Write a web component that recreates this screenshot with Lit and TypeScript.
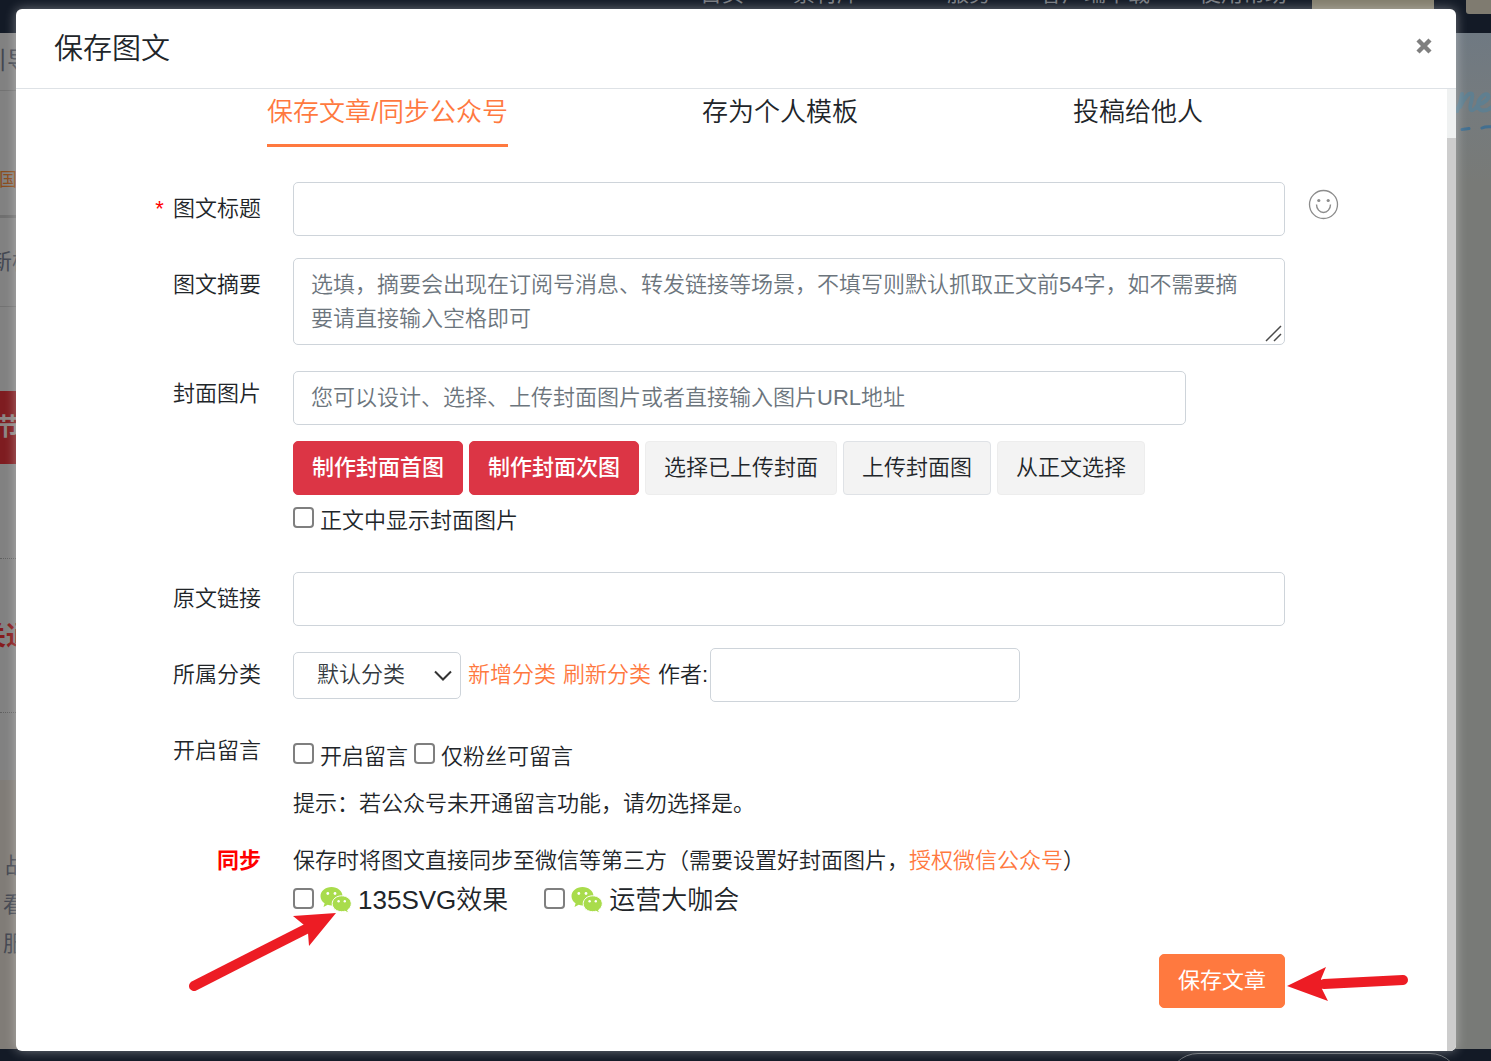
import { LitElement, html, css, svg } from "lit";
import { customElement, state } from "lit/decorators.js";

const fontStack = css`"Liberation Sans", "Noto Sans CJK SC", sans-serif`;

/** The dimmed editor page that stays visible round the dialog. */
@customElement("page-backdrop")
class PageBackdrop extends LitElement {
  static styles = css`
    :host {
      display: block;
      overflow: hidden;
      background: #787a77;
      font: 22px/34px ${fontStack};
      color: #424650;
      white-space: nowrap;
    }
    .page {
      position: relative;
      height: 100%;
      display: flex;
      flex-direction: column;
    }
    .nav {
      height: 33px;
      background: #131a26;
      color: #777a80;
      display: flex;
      justify-content: flex-end;
      align-items: flex-start;
      overflow: hidden;
    }
    .links {
      display: flex;
      margin-top: -23px;
      margin-right: 25px;
    }
    .links span {
      margin-left: 49px;
    }
    .links .apart {
      margin-left: 88px;
    }
    .plan {
      width: 122px;
      height: 33px;
      background: #827d6c;
      margin-right: 32px;
    }
    .user {
      width: 25px;
      height: 14px;
      background: #7f7b70;
      border-bottom-left-radius: 3px;
    }
    .main {
      flex: 1;
      display: flex;
      justify-content: space-between;
    }
    .side {
      position: relative;
      width: 60px;
      background: #818181;
    }
    .banner {
      position: relative;
      width: 60px;
      background: linear-gradient(#6f7982, #757b7e 70px, #787a77 150px);
    }
    .item {
      position: absolute;
      right: 42px;
    }
    .rule {
      position: absolute;
      left: 0;
      width: 100%;
      border-top: 1px solid #727272;
    }
    .rule.thick {
      border-top: 3px solid #6f6f6f;
    }
    .rule.dotted {
      border-top: 1px dotted #606060;
    }
    .y1 { top: 57px; }
    .y2 { top: 182px; }
    .y3 { top: 273px; }
    .y4 { top: 525px; }
    .y5 { top: 679px; }
    .guide { top: 11px; font-size: 24px; right: 29px; }
    .china { top: 130px; font-size: 18px; right: 43px; color: #8a4b1c; }
    .tpl { top: 212px; right: 26px; }
    .fest {
      left: 0;
      right: auto;
      top: 358px;
      width: 60px;
      height: 73px;
      background: #7e1c20;
    }
    .fest span {
      position: absolute;
      right: 40px;
      top: 19px;
      font-weight: 700;
      font-size: 24px;
      color: #8b8583;
    }
    .red { top: 586px; font-weight: 700; font-size: 26px; right: 28px; color: #861a1c; }
    .beige {
      position: absolute;
      top: 747px;
      bottom: 0;
      left: 0;
      width: 100%;
      background: #807c77;
    }
    .l1 { top: 816px; right: 33px; }
    .l2 { top: 855px; right: 35px; }
    .l3 { top: 894px; right: 35px; }
    .script {
      position: absolute;
      left: 22px;
      top: 46px;
    }
    .foot {
      height: 12px;
      background: #131a26;
      display: flex;
      justify-content: flex-end;
      overflow: hidden;
    }
    .pill {
      box-sizing: border-box;
      width: 292px;
      height: 60px;
      margin: 4px 31px 0 0;
      border: 1px solid #666b70;
      border-radius: 30px;
      flex: none;
    }
  `;

  render() {
    return html`
      <div class="page">
        <div class="nav">
          <div class="links">
            <span>首页</span><span>素材库</span><span class="apart">服务</span
            ><span>客户端下载</span><span>使用帮助</span>
          </div>
          <div class="plan"></div>
          <div class="user"></div>
        </div>
        <div class="main">
          <div class="side">
            <div class="beige"></div>
            <div class="item guide">引导</div>
            <div class="rule y1"></div>
            <div class="item china">国</div>
            <div class="rule thick y2"></div>
            <div class="item tpl">新样</div>
            <div class="rule y3"></div>
            <div class="item fest"><span>节</span></div>
            <div class="rule dotted y4"></div>
            <div class="item red">关通</div>
            <div class="rule dotted y5"></div>
            <div class="item l1">战</div>
            <div class="item l2">看</div>
            <div class="item l3">服</div>
          </div>
          <div class="banner">
            <svg class="script" width="40" height="56" viewBox="0 0 40 56" fill="none">
              <path d="M4 32Q8 24 9 15M7 28C11 19 16 13 19 15 21 17 15 29 18 31 20 32 22 30 24 27M26 25C32 24 37 19 35 16 32 13 25 20 25 26 25 33 33 33 39 28" stroke="#5f7f90" stroke-width="4" stroke-linecap="round"/>
              <path d="M9 50.500l7-1M29 49q4-2 11-1" stroke="#426f90" stroke-width="3" stroke-linecap="round"/>
            </svg>
          </div>
        </div>
        <div class="foot"><div class="pill"></div></div>
      </div>
    `;
  }
}

const wechatIcon = svg`
  <path fill="#a9dc4c" d="M11.5 1C5.400 1 .5 5 .5 10.200c0 2.900 1.600 5.400 4.100 7.100L3.500 21l4.200-2.200c1.200.3 2.500.6 3.800.6 6.100 0 11-4.100 11-9.200S17.600 1 11.500 1z"/>
  <path fill="#a9dc4c" stroke="#fff" stroke-width="1" d="M21.700 9.800c-5.300 0-9.500 3.500-9.500 7.900s4.200 8 9.500 8c1.200 0 2.300-.2 3.300-.5l3.600 2-1-3.200c2.300-1.500 3.700-3.800 3.700-6.300 0-4.400-4.300-7.900-9.600-7.900z"/>
  <g fill="#fff"><circle cx="7.800" cy="7.500" r="1.400"/><circle cx="15" cy="7.500" r="1.400"/><circle cx="18.600" cy="15.200" r="1.200"/><circle cx="24.800" cy="15.200" r="1.200"/></g>`;

@customElement("app-root")
class AppRoot extends LitElement {
  static styles = css`
    :host {
      display: block;
      position: relative;
      box-sizing: border-box;
      min-height: 100vh;
      padding: 9px 35px 10px 16px;
      overflow: hidden;
      font: 350 22px/34px ${fontStack};
      color: #212529;
    }
    *, *::before, *::after {
      box-sizing: border-box;
    }
    page-backdrop {
      position: absolute;
      inset: 0;
    }
    .dialog {
      position: relative;
      display: flex;
      flex-direction: column;
      min-height: calc(100vh - 19px);
      background: #fff;
      border-radius: 6px;
      box-shadow: 0 0 12px rgba(255, 255, 255, 0.4);
    }
    .head {
      display: flex;
      align-items: center;
      justify-content: space-between;
      height: 80px;
      padding: 0 22px 0 38px;
      border-bottom: 1px solid #dee2e6;
    }
    h1 {
      margin: 0;
      font-size: 29px;
      font-weight: 350;
      line-height: 40px;
    }
    button, input, select, textarea {
      font: inherit;
      color: inherit;
      margin: 0;
    }
    .close {
      display: flex;
      padding: 0;
      margin-bottom: 6px;
      border: 0;
      background: none;
    }
    .body {
      flex: 1;
      display: flex;
    }
    .content {
      flex: 1;
      min-width: 0;
      padding-bottom: 40px;
    }
    .scroll {
      display: flex;
      width: 9px;
      padding-top: 49px;
      background: #eff1f1;
      border-bottom-right-radius: 6px;
      overflow: hidden;
    }
    .thumb {
      flex: 1;
      background: #cdcdcd;
    }
    .tabs {
      display: grid;
      grid-template-columns: 393fr 392fr 324fr;
      justify-items: center;
      padding: 0 147px 0 175px;
    }
    .tab {
      height: 58px;
      padding: 4px 0 12px;
      border: 0;
      border-bottom: 3px solid transparent;
      background: none;
      font-size: 26px;
      line-height: 39px;
      white-space: nowrap;
    }
    .tab.on {
      color: #ff793f;
      border-color: #ff793f;
    }
    .form {
      display: flex;
      flex-direction: column;
      gap: 22px;
      padding-top: 35px;
    }
    .row {
      display: grid;
      grid-template-columns: 245px minmax(0, 1fr) 162px;
      align-items: start;
    }
    .label {
      padding: 10px 0;
      text-align: right;
    }
    .label.tight {
      padding: 0;
      color: #f00;
      font-weight: 700;
    }
    .star {
      color: #f00;
      margin-right: 3px;
    }
    .field {
      margin-left: 32px;
    }
    .box {
      display: block;
      width: 100%;
      height: 54px;
      padding: 9px 17px;
      border: 1px solid #ced4da;
      border-radius: 5px;
      background: #fff;
      outline: 0;
    }
    .box::placeholder {
      color: #6c757d;
      opacity: 1;
    }
    .area {
      position: relative;
    }
    .area .box {
      height: 87px;
      padding-right: 28px;
      resize: none;
      overflow: hidden;
    }
    .grip {
      position: absolute;
      right: 3px;
      bottom: 3px;
    }
    .emoji {
      justify-self: start;
      margin: 7px 0 0 23px;
      padding: 0;
      border: 0;
      background: none;
      display: flex;
    }
    .cover {
      padding: 4px 0 12px;
    }
    .cover .box {
      width: 90%;
    }
    .buttons {
      display: flex;
      flex-wrap: wrap;
      gap: 6px;
      padding: 16px 0 9px;
    }
    .btn {
      height: 54px;
      padding: 0 18px;
      border: 1px solid #ededed;
      border-radius: 4px;
      background: #f3f3f3;
      white-space: nowrap;
    }
    .btn.strong {
      border-color: #dc3545;
      border-radius: 5px;
      background: #dc3545;
      color: #fff;
      font-weight: 500;
    }
    .btn.framed {
      border-color: #dfe2e6;
    }
    .btn.save {
      border-color: #ff793f;
      border-radius: 5px;
      background: #ff793f;
      color: #fff;
      font-weight: 400;
    }
    .line {
      display: flex;
      flex-wrap: wrap;
      align-items: center;
      column-gap: 6px;
    }
    .check {
      display: flex;
      align-items: center;
      gap: 6px;
    }
    .tick {
      appearance: none;
      flex: none;
      width: 21px;
      height: 21px;
      margin-bottom: 8px;
      border: 2px solid #7f7f7f;
      border-radius: 4px;
      background: #fff;
    }
    .tick:checked {
      background: #ff793f;
    }
    .category {
      column-gap: 7px;
    }
    .pick {
      position: relative;
      width: 168px;
    }
    .pick select {
      display: block;
      appearance: none;
      width: 100%;
      height: 47px;
      padding: 0 23px;
      border: 1px solid #ced4da;
      border-radius: 5px;
      background: #fff;
      color: #343a40;
    }
    .pick svg {
      position: absolute;
      right: 8px;
      top: 17px;
      pointer-events: none;
    }
    .author {
      display: flex;
      align-items: center;
      gap: 2px;
    }
    .author .box {
      width: 310px;
    }
    a {
      color: #ff793f;
      text-decoration: none;
    }
    .comments {
      padding-top: 16px;
    }
    .hint {
      padding-top: 13px;
    }
    .sync {
      padding-top: 1px;
    }
    .accounts {
      column-gap: 36px;
      padding-top: 3px;
      font-size: 26px;
      line-height: 39px;
    }
    .accounts .tick {
      margin-bottom: 5px;
    }
    .wechat {
      margin-bottom: 1px;
    }
    .foot {
      display: flex;
      justify-content: flex-end;
      padding: 12px 162px 0 0;
    }
    .pointer {
      position: absolute;
      pointer-events: none;
    }
    .p1 { left: 172px; top: 902px; }
    .p2 { left: 1270px; top: 956px; }
  `;

  @state() private tab = 0;

  private tabs = ["保存文章/同步公众号", "存为个人模板", "投稿给他人"];

  private accounts = ["135SVG效果", "运营大咖会"];

  private check(text: string) {
    return html`<label class="check"><input class="tick" type="checkbox" />${text}</label>`;
  }

  render() {
    return html`
      <page-backdrop></page-backdrop>
      <div class="dialog" role="dialog" aria-labelledby="title">
        <div class="head">
          <h1 id="title">保存图文</h1>
          <button class="close" type="button" aria-label="关闭">
            <svg width="20" height="20" viewBox="0 0 20 20">
              <path d="M4 4l12 12M16 4l-12 12" stroke="#7f7f7f" stroke-width="4.400"/>
            </svg>
          </button>
        </div>
        <div class="body">
          <div class="content">
            <div class="tabs" role="tablist">
              ${this.tabs.map(
                (t, i) => html`<button
                  class="tab ${i === this.tab ? "on" : ""}"
                  type="button"
                  role="tab"
                  aria-selected=${i === this.tab}
                  @click=${() => (this.tab = i)}
                >${t}</button>`
              )}
            </div>
            <form class="form" @submit=${(e: Event) => e.preventDefault()}>
              <div class="row">
                <label class="label" for="name"><span class="star">*</span> 图文标题</label>
                <div class="field"><input class="box" id="name" type="text" /></div>
                <button class="emoji" type="button" aria-label="表情">
                  <svg width="31" height="31" viewBox="0 0 31 31" fill="none" stroke="#8c8c8c">
                    <circle cx="15.500" cy="15.500" r="14" stroke-width="1.300"/>
                    <path d="M8.500 15.500a7 8 0 0 0 14 0" stroke-width="1.400"/>
                    <circle cx="10.800" cy="11.500" r="1.600" fill="#8c8c8c" stroke="none"/>
                    <circle cx="20.200" cy="11.500" r="1.600" fill="#8c8c8c" stroke="none"/>
                  </svg>
                </button>
              </div>
              <div class="row">
                <label class="label" for="summary">图文摘要</label>
                <div class="field area">
                  <textarea class="box" id="summary" placeholder="选填，摘要会出现在订阅号消息、转发链接等场景，不填写则默认抓取正文前54字，如不需要摘要请直接输入空格即可"></textarea>
                  <svg class="grip" width="17" height="17" viewBox="0 0 17 17">
                    <path d="M1 16L16 1M9 16l7-7" stroke="#4a4a4a" stroke-width="1.500"/>
                  </svg>
                </div>
              </div>
              <div class="row">
                <label class="label" for="cover">封面图片</label>
                <div class="field cover">
                  <input class="box" id="cover" type="text" placeholder="您可以设计、选择、上传封面图片或者直接输入图片URL地址" />
                  <div class="buttons">
                    <button class="btn strong" type="button">制作封面首图</button>
                    <button class="btn strong" type="button">制作封面次图</button>
                    <button class="btn" type="button">选择已上传封面</button>
                    <button class="btn framed" type="button">上传封面图</button>
                    <button class="btn" type="button">从正文选择</button>
                  </div>
                  <div class="line">${this.check("正文中显示封面图片")}</div>
                </div>
              </div>
              <div class="row">
                <label class="label" for="source">原文链接</label>
                <div class="field"><input class="box" id="source" type="text" /></div>
              </div>
              <div class="row">
                <label class="label" for="category">所属分类</label>
                <div class="field line category">
                  <div class="pick">
                    <select id="category"><option>默认分类</option></select>
                    <svg width="20" height="14" viewBox="0 0 20 14">
                      <path d="M2 2.500l8 8 8-8" fill="none" stroke="#333" stroke-width="2"/>
                    </svg>
                  </div>
                  <a href="#add">新增分类</a>
                  <a href="#refresh">刷新分类</a>
                  <label class="author">作者:<input class="box" type="text" /></label>
                </div>
              </div>
              <div class="row">
                <div class="label">开启留言</div>
                <div class="field comments">
                  <div class="line">${this.check("开启留言")}${this.check("仅粉丝可留言")}</div>
                  <div class="hint">提示：若公众号未开通留言功能，请勿选择是。</div>
                </div>
              </div>
              <div class="row sync">
                <div class="label tight">同步</div>
                <div class="field">
                  <div>保存时将图文直接同步至微信等第三方（需要设置好封面图片，<a href="#auth">授权微信公众号</a>）</div>
                  <div class="line accounts">
                    ${this.accounts.map(
                      (name) => html`<label class="check">
                        <input class="tick" type="checkbox" />
                        <svg class="wechat" width="32" height="28" viewBox="0 0 32 28">${wechatIcon}</svg>
                        ${name}
                      </label>`
                    )}
                  </div>
                </div>
              </div>
              <div class="foot"><button class="btn save" type="submit">保存文章</button></div>
            </form>
          </div>
          <div class="scroll"><div class="thumb"></div></div>
        </div>
        <svg class="pointer p1" width="152" height="84" viewBox="188 911 152 84">
          <path d="M194 986L308 928" stroke="#ed1c24" stroke-width="10" stroke-linecap="round"/>
          <path d="M336 913L293 916 304 925 308 933 309 946z" fill="#ed1c24"/>
        </svg>
        <svg class="pointer p2" width="124" height="40" viewBox="1286 965 124 40">
          <path d="M1403 980L1324 984" stroke="#ed1c24" stroke-width="10" stroke-linecap="round"/>
          <path d="M1287 986L1326 967 1321 979 1322 989 1328 1001z" fill="#ed1c24"/>
        </svg>
      </div>
    `;
  }
}
